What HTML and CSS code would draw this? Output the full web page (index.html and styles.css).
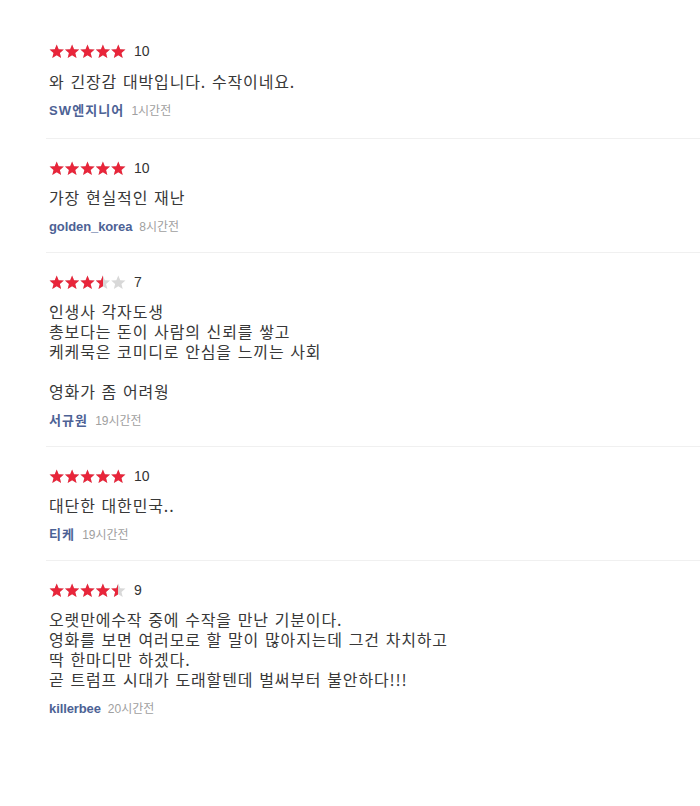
FILE: index.html
```html
<!DOCTYPE html>
<html lang="ko">
<head>
<meta charset="utf-8">
<link rel="stylesheet" href="styles.css">
</head>
<body>
<svg class="defs" width="0" height="0" aria-hidden="true">
  <defs>
    <symbol id="star" viewBox="0 0 24 23">
      <path d="M12 0.6l3.05 7.55 8.1.55-6.2 5.2 1.95 7.9L12 17.5l-6.9 4.3 1.95-7.9-6.2-5.2 8.1-.55z"/>
    </symbol>
    <symbol id="stars" viewBox="0 0 77 15">
      <use href="#star" x="0" y="0" width="15.4" height="14.8"/>
      <use href="#star" x="15.4" y="0" width="15.4" height="14.8"/>
      <use href="#star" x="30.8" y="0" width="15.4" height="14.8"/>
      <use href="#star" x="46.2" y="0" width="15.4" height="14.8"/>
      <use href="#star" x="61.6" y="0" width="15.4" height="14.8"/>
    </symbol>
  </defs>
</svg>
<ul class="reviews">
  <li class="review">
    <div class="rating">
      <span class="stars"><svg class="stars-bg"><use href="#stars"/></svg><span class="stars-fill" style="width:100%"><svg><use href="#stars"/></svg></span></span>
      <em class="score">10</em>
    </div>
    <p class="text">와 긴장감 대박입니다. 수작이네요.</p>
    <div class="meta"><a class="author ko">SW엔지니어</a><span class="time">1시간전</span></div>
  </li>
  <li class="review">
    <div class="rating">
      <span class="stars"><svg class="stars-bg"><use href="#stars"/></svg><span class="stars-fill" style="width:100%"><svg><use href="#stars"/></svg></span></span>
      <em class="score">10</em>
    </div>
    <p class="text">가장 현실적인 재난</p>
    <div class="meta"><a class="author">golden_korea</a><span class="time">8시간전</span></div>
  </li>
  <li class="review">
    <div class="rating">
      <span class="stars"><svg class="stars-bg"><use href="#stars"/></svg><span class="stars-fill" style="width:70%"><svg><use href="#stars"/></svg></span></span>
      <em class="score">7</em>
    </div>
    <p class="text">인생사 각자도생<br>총보다는 돈이 사람의 신뢰를 쌓고<br>케케묵은 코미디로 안심을 느끼는 사회<br><br>영화가 좀 어려웡</p>
    <div class="meta"><a class="author ko">서규원</a><span class="time">19시간전</span></div>
  </li>
  <li class="review">
    <div class="rating">
      <span class="stars"><svg class="stars-bg"><use href="#stars"/></svg><span class="stars-fill" style="width:100%"><svg><use href="#stars"/></svg></span></span>
      <em class="score">10</em>
    </div>
    <p class="text">대단한 대한민국..</p>
    <div class="meta"><a class="author ko">티케</a><span class="time">19시간전</span></div>
  </li>
  <li class="review">
    <div class="rating">
      <span class="stars"><svg class="stars-bg"><use href="#stars"/></svg><span class="stars-fill" style="width:90%"><svg><use href="#stars"/></svg></span></span>
      <em class="score">9</em>
    </div>
    <p class="text">오랫만에수작 중에 수작을 만난 기분이다.<br>영화를 보면 여러모로 할 말이 많아지는데 그건 차치하고<br>딱 한마디만 하겠다.<br>곧 트럼프 시대가 도래할텐데 벌써부터 불안하다!!!</p>
    <div class="meta"><a class="author">killerbee</a><span class="time">20시간전</span></div>
  </li>
</ul>
</body>
</html>
```
FILE: styles.css
```css
html, body {
  margin: 0;
  padding: 0;
  background: #fff;
}
body {
  font-family: "Noto Sans CJK KR", "Noto Sans", sans-serif;
  color: #333;
}
.defs {
  position: absolute;
  width: 0;
  height: 0;
  overflow: hidden;
}
.reviews {
  list-style: none;
  margin: 0;
  padding: 22px 0 0 46px;
}
.review {
  padding: 21px 0 17px 3px;
  border-top: 1px solid #f0f0f0;
}
.review:first-child {
  border-top: 0;
  padding-bottom: 19px;
}
.rating {
  display: flex;
  align-items: center;
  height: 16px;
}
.stars {
  position: relative;
  display: block;
  width: 77px;
  height: 15px;
}
.stars svg {
  display: block;
  width: 77px;
  height: 15px;
}
.stars-bg {
  fill: #d8d8d8;
}
.stars-fill {
  position: absolute;
  left: 0;
  top: 0;
  height: 15px;
  overflow: hidden;
  fill: #e8253a;
}
.score {
  font-style: normal;
  font-family: "Liberation Sans", Arial, sans-serif;
  font-size: 14px;
  color: #333;
  margin-left: 8px;
  line-height: 16px;
}
.text {
  margin: 11px 0 0;
  font-size: 16px;
  line-height: 20px;
  letter-spacing: 0.85px;
  word-spacing: 0.5px;
  color: #383838;
}
.review:first-child .text {
  margin-top: 12px;
}
.meta {
  margin-top: 12px;
  display: flex;
  align-items: baseline;
  height: 16px;
  line-height: 16px;
}
.author {
  font-family: "Liberation Sans", "Noto Sans CJK KR", sans-serif;
  font-weight: bold;
  font-size: 13px;
  letter-spacing: -0.1px;
  color: #4d6295;
}
.author.ko {
  letter-spacing: 1.1px;
}
.time {
  font-family: "Liberation Sans", "Noto Sans CJK KR", sans-serif;
  font-size: 12px;
  color: #a0a0a0;
  margin-left: 7px;
}
```
